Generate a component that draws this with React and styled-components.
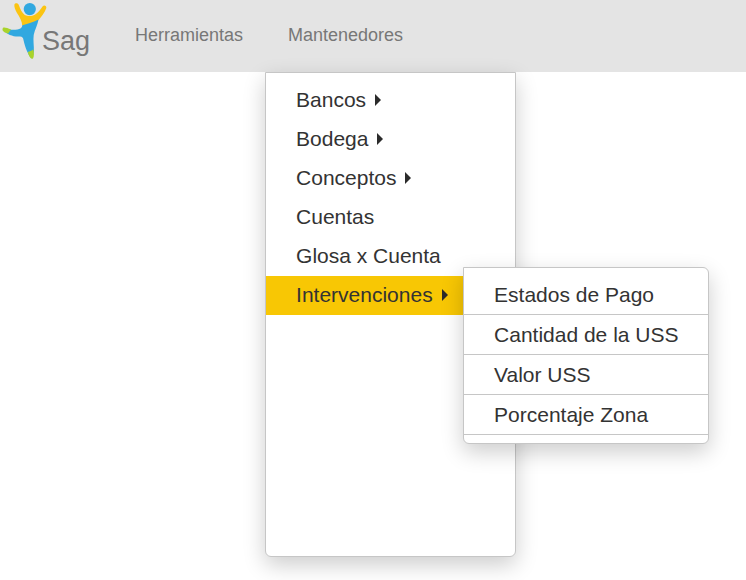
import React from "react";
import styled, { createGlobalStyle } from "styled-components";

const GlobalStyle = createGlobalStyle`
  * { box-sizing: border-box; }
  body {
    margin: 0;
    background: #fff;
    font-family: "Liberation Sans", Arial, sans-serif;
  }
  ul { list-style: none; margin: 0; padding: 0; }
  button { border: 0; background: none; font: inherit; cursor: pointer; }
`;

const Page = styled.div`
  min-height: 100vh;
  background: #fff;
`;

const Header = styled.header`
  display: flex;
  align-items: flex-start;
  height: 72px;
  background: #e4e4e4;
`;

const Brand = styled.a`
  display: flex;
  align-items: flex-start;
  width: 112px;
  color: #777;
  font-size: 27px;
  line-height: 32px;
  text-decoration: none;
`;

const Logo = styled.svg`
  flex: none;
  width: 48px;
  height: 60px;
`;

const BrandName = styled.span`
  margin: 25px 0 0 -6px;
`;

const NavList = styled.ul`
  display: flex;
`;

const NavItem = styled.li`
  position: relative;
`;

const NavButton = styled.button`
  display: block;
  height: 72px;
  padding: 0 22px 2px 23px;
  color: #777;
  && {
    font-size: 18px;
    line-height: 70px;
  }
`;

const Panel = styled.ul`
  position: absolute;
  background: #fff;
  border: 1px solid #c6c6c6;
  box-shadow: 0 8px 22px rgba(0, 0, 0, 0.2);
`;

const Menu = styled(Panel)`
  top: 100%;
  left: 0;
  width: 251px;
  min-height: 485px;
  padding: 8px 0;
  border-radius: 0 0 6px 6px;
`;

const Submenu = styled(Panel)`
  top: -9px;
  left: 197px;
  width: 246px;
  padding: 7px 0 8px;
  border-radius: 0 6px 6px 6px;
`;

const MenuItem = styled.li`
  position: relative;
  border-bottom: ${(p) => (p.$divided ? "1px solid #c6c6c6" : "0")};
`;

const MenuLink = styled.a`
  display: flex;
  align-items: center;
  gap: 9px;
  height: 39px;
  padding: 0 30px 2px;
  background: ${(p) => (p.$active ? "#f8c704" : "transparent")};
  color: #333;
  font-size: 21px;
  line-height: 37px;
  text-decoration: none;
  white-space: nowrap;
`;

const SubmenuLink = styled(MenuLink)`
  padding: 0 30px;
  line-height: 39px;
`;

const Caret = styled.span`
  border-top: 6px solid transparent;
  border-bottom: 6px solid transparent;
  border-left: 6px solid #2b2b2b;
`;

const entries = [
  { label: "Bancos", nested: true },
  { label: "Bodega", nested: true },
  { label: "Conceptos", nested: true },
  { label: "Cuentas" },
  { label: "Glosa x Cuenta" },
  {
    label: "Intervenciones",
    nested: true,
    children: ["Estados de Pago", "Cantidad de la USS", "Valor USS", "Porcentaje Zona"],
  },
];

function Figure() {
  return (
    <Logo viewBox="0 0 48 60" aria-hidden="true">
      <path
        d="M14.4 4.6C15.2 2.6 18 2.8 18.9 5.2C20.2 9 22 12.7 24.8 15C27.5 16.4 32 16.4 34.8 14.8C38.2 12.7 40.5 9.5 42.5 6.5C44 4.6 46.8 5.9 46.3 8.1C45 12.4 41.2 17 38.4 20.2C36 23 27 25.4 22.2 25.6C22.2 21.4 19.6 17 17 12.9C15.4 10.2 13.9 6.8 14.4 4.6Z"
        fill="#fbc412"
      />
      <path
        d="M22.3 25.2C27 23.5 32.5 22.7 38.5 19.4C37.8 24.5 34.8 29.5 33.7 35C33 40 34 46 33.9 51C33.6 54.2 32.8 57 31.4 58.5C28.3 55 25 47.5 23.5 40C23.2 37.6 22.3 36.4 20 36.4C13 36.9 7.5 34.4 3.3 30.4C3.3 28.6 4.5 28 6 28.4C11.3 30.4 17.2 30 20.8 28.2C21.8 27.4 22.2 26.4 22.3 25.2Z"
        fill="#31a8e0"
      />
      <path
        d="M3.5 27.6C5 27.3 7.9 28.1 11 29.5L8.2 33.5C5.2 32.8 2.2 31.2 2.5 29.2C2.6 28.4 3 27.8 3.5 27.6Z"
        fill="#a9d32b"
      />
      <path
        d="M27.8 52C29.4 50.8 31.8 51.3 33.2 49.2C34.2 52.5 34.2 56.5 33 58.5C31 59.6 28.8 56.2 27.8 52Z"
        fill="#a9d32b"
      />
      <circle cx="29.8" cy="9.1" r="6.1" fill="#31a8e0" />
    </Logo>
  );
}

export default function App() {
  return (
    <Page>
      <GlobalStyle />
      <Header>
        <Brand href="#">
          <Figure />
          <BrandName>Sag</BrandName>
        </Brand>
        <nav>
          <NavList>
            <NavItem>
              <NavButton type="button">Herramientas</NavButton>
            </NavItem>
            <NavItem>
              <NavButton type="button" aria-expanded="true">Mantenedores</NavButton>
              <Menu>
                {entries.map((entry) => (
                  <MenuItem key={entry.label}>
                    <MenuLink href="#" $active={Boolean(entry.children)}>
                      {entry.label}
                      {entry.nested && <Caret />}
                    </MenuLink>
                    {entry.children && (
                      <Submenu>
                        {entry.children.map((label) => (
                          <MenuItem key={label} $divided>
                            <SubmenuLink href="#">{label}</SubmenuLink>
                          </MenuItem>
                        ))}
                      </Submenu>
                    )}
                  </MenuItem>
                ))}
              </Menu>
            </NavItem>
          </NavList>
        </nav>
      </Header>
    </Page>
  );
}
